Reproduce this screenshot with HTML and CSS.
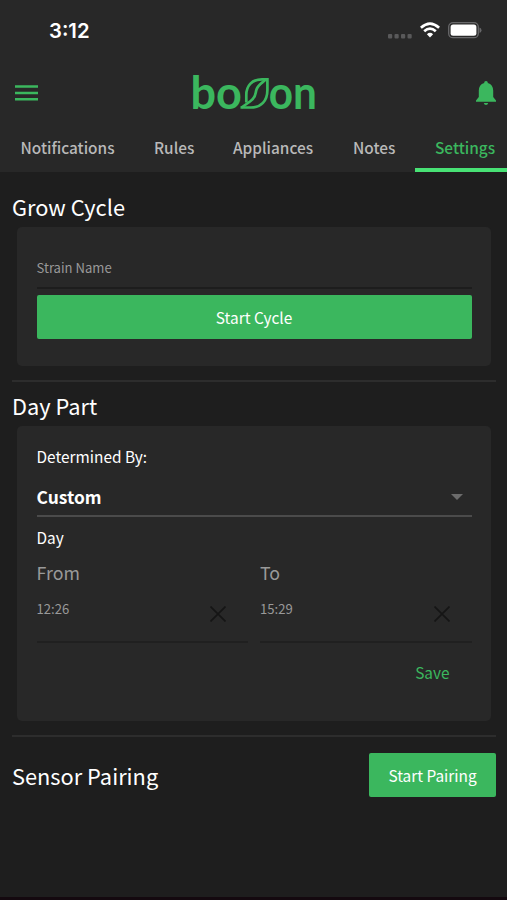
FILE: index.html
```html
<!DOCTYPE html>
<html lang="en">
<head>
<meta charset="utf-8">
<title>Settings</title>
<link rel="stylesheet" href="styles.css">
</head>
<body>
<header class="top">
  <div class="status">
    <span class="clock">3:12</span>
    <div class="indicators">
      <svg class="signal" viewBox="0 0 24 5"><g fill="#59595a"><rect x="0" y="0" width="4.2" height="4.4" rx="1"/><rect x="6.5" y="0" width="4.2" height="4.4" rx="1"/><rect x="13" y="0" width="4.2" height="4.4" rx="1"/><rect x="19.5" y="0" width="4.2" height="4.4" rx="1"/></g></svg>
      <svg class="wifi" viewBox="0 0 20 16"><g fill="none" stroke="#fff" stroke-width="2.7"><path d="M.9 5.7Q10-2.6 19.1 5.7"/><path d="M4.2 9.2Q10 4 15.8 9.2"/></g><path d="M6.9 12.2Q10 9.4 13.1 12.2L10 15.4Z" fill="#fff"/></svg>
      <svg class="battery" viewBox="0 0 34 17"><rect x=".7" y=".7" width="29.6" height="15" rx="4.3" fill="none" stroke="#68686a" stroke-width="1.3"/><rect x="2.6" y="2.6" width="25.8" height="11.2" rx="2.5" fill="#fff"/><path d="M31.5 5.5Q33.5 6.3 33.5 8.2T31.5 11Z" fill="#68686a"/></svg>
    </div>
  </div>
  <div class="bar">
    <svg class="menu" viewBox="0 0 23 16"><path d="M0 1.6H23M0 7.9H23M0 14.2H23" stroke="#3bb75e" stroke-width="2.5"/></svg>
    <svg class="logo" viewBox="0 0 126 60"><g class="wordmark"><text x="-1.6" y="45.8" textLength="51.4" lengthAdjust="spacingAndGlyphs">bo</text><text x="76.8" y="45.8" textLength="48.2" lengthAdjust="spacingAndGlyphs">on</text></g><g fill="none" stroke="#3bb75e" stroke-width="2.7"><path d="M48.5 44.5H59C69 44.5 75.4 38 75.4 27V16.4H70C59.5 16.4 54.3 23 54.3 32V39.5"/><path d="M49.5 44.5L58 38.5C64.5 34 63 31 64.5 26.5S70 20 73.5 16.8"/></g></svg>
    <svg class="bell" viewBox="0 0 20 24"><path d="M10 0C11.2 0 11.8.9 11.8 2C15.4 3 17.2 6 17.2 9.5V16L20 19.5V20.7H0V19.5L2.8 16V9.5C2.8 6 4.6 3 8.2 2C8.2.9 8.8 0 10 0ZM7.8 22H12.2Q11.8 24 10 24T7.8 22Z" fill="#3bb75e"/></svg>
  </div>
  <nav class="tabs">
    <a class="tab t1">Notifications</a><a class="tab t2">Rules</a><a class="tab t3">Appliances</a><a class="tab t4">Notes</a><a class="tab active">Settings</a>
  </nav>
</header>
<main>
  <section class="grow">
    <h2>Grow Cycle</h2>
    <div class="card">
      <div class="strain">Strain Name</div>
      <button class="btn wide">Start Cycle</button>
    </div>
  </section>
  <section class="daypart">
    <h2>Day Part</h2>
    <div class="card">
      <div class="label">Determined By:</div>
      <div class="select"><span>Custom</span><svg class="caret" viewBox="0 0 12 6"><path d="M0 0H12L6 6Z" fill="#6c6c6c"/></svg></div>
      <div class="label day">Day</div>
      <div class="times">
        <div class="field"><div class="cap">From</div><div class="value"><span>12:26</span><svg class="clear" viewBox="0 0 16 16"><path d="M.5.5L15.5 15.5M15.5.5L.5 15.5" stroke="#151515" stroke-width="1.6"/></svg></div></div>
        <div class="field"><div class="cap">To</div><div class="value"><span>15:29</span><svg class="clear" viewBox="0 0 16 16"><path d="M.5.5L15.5 15.5M15.5.5L.5 15.5" stroke="#151515" stroke-width="1.6"/></svg></div></div>
      </div>
      <div class="save">Save</div>
    </div>
  </section>
  <section class="pairing">
    <h2>Sensor Pairing</h2>
    <button class="btn">Start Pairing</button>
  </section>
</main>
</body>
</html>
```
FILE: styles.css
```css
* { box-sizing: border-box; }
body {
  margin: 0;
  height: 900px;
  overflow: hidden;
  background: #1e1e1e;
  color: #fff;
  font-family: "Noto Sans CJK SC", "Noto Sans", sans-serif;
  display: flex;
  flex-direction: column;
  border-bottom: 3px solid #14090f;
}
svg { display: block; }
.top { height: 172px; background: #282828; flex: none; }
.status { height: 62px; display: flex; justify-content: space-between; padding: 0 25px 0 49px; }
.clock { font: 600 20.3px/62px Inter, sans-serif; }
.indicators { display: flex; align-items: flex-start; padding-top: 22px; }
.signal { width: 24px; height: 5px; margin: 12px 8px 0 0; }
.wifi { width: 20px; height: 16px; margin-right: 8px; }
.battery { width: 34px; height: 17px; }
.bar { height: 62px; display: flex; justify-content: space-between; align-items: center; padding: 0 11px 0 15px; }
.menu { width: 23px; height: 16px; }
.logo { width: 126px; height: 60px; margin: 0 4px 0 0; overflow: visible; }
.wordmark { font: 700 45px Lato, sans-serif; fill: #3bb75e; }
.bell { width: 20px; height: 24px; }
.tabs { height: 48px; display: flex; }
.tab { font-size: 15.4px; line-height: 46px; font-weight: 500; color: #b9b9b9; white-space: nowrap; flex: none; }
.t1 { width: 154px; padding-left: 20.5px; }
.t2 { width: 79px; }
.t3 { width: 120px; }
.t4 { width: 62px; }
.active { width: 92px; padding-left: 20px; color: #3bb75e; border-bottom: 4px solid #48e275; }
main { padding: 0 11px 0 12px; }
h2 { margin: 0; font-size: 21.8px; line-height: 36px; font-weight: 400; }
.grow { height: 210px; padding-top: 17px; border-bottom: 2px solid #2d2d2d; }
.daypart { height: 355px; padding-top: 6px; border-bottom: 2px solid #2d2d2d; }
.card { margin: 2px 5px 0; padding: 0 19.5px; border-radius: 5px; background: #282828; }
.grow .card { height: 139px; padding-top: 20px; }
.daypart .card { height: 295px; padding-top: 17px; }
.strain { height: 42px; border-bottom: 2px solid #1d1d1d; font-size: 13.1px; line-height: 42px; color: #999; margin-bottom: 6px; }
.btn { height: 44px; border: 0; border-radius: 2px; background: #3bb75e; color: #fff; font: 400 15.4px/44px "Noto Sans CJK SC", sans-serif; width: 127px; padding: 0; }
.wide { width: 100%; display: block; }
.label { font-size: 15.4px; line-height: 26px; }
.select { height: 48px; display: flex; justify-content: space-between; align-items: center; padding: 9px 9px 0 0; border-bottom: 2px solid #4b4b4b; font-size: 17.4px; font-weight: 700; }
.caret { width: 12px; height: 6px; }
.day { margin-top: 7px; }
.times { display: grid; grid-template-columns: 1fr 1fr; gap: 12px; }
.cap { font-size: 17.8px; line-height: 28px; margin-top: 8px; color: #999; }
.value { display: flex; justify-content: space-between; height: 57px; padding-right: 22px; border-bottom: 2px solid #202020; font-size: 13.1px; line-height: 45px; color: #999; }
.clear { width: 16px; height: 16px; margin-top: 20px; }
.save { text-align: right; padding-right: 22px; margin-top: 16px; font-size: 15.4px; line-height: 26px; color: #3bb75e; }
.pairing { display: flex; justify-content: space-between; align-items: center; margin-top: 16px; height: 44px; }
.pairing h2 { padding-top: 1px; }
```
